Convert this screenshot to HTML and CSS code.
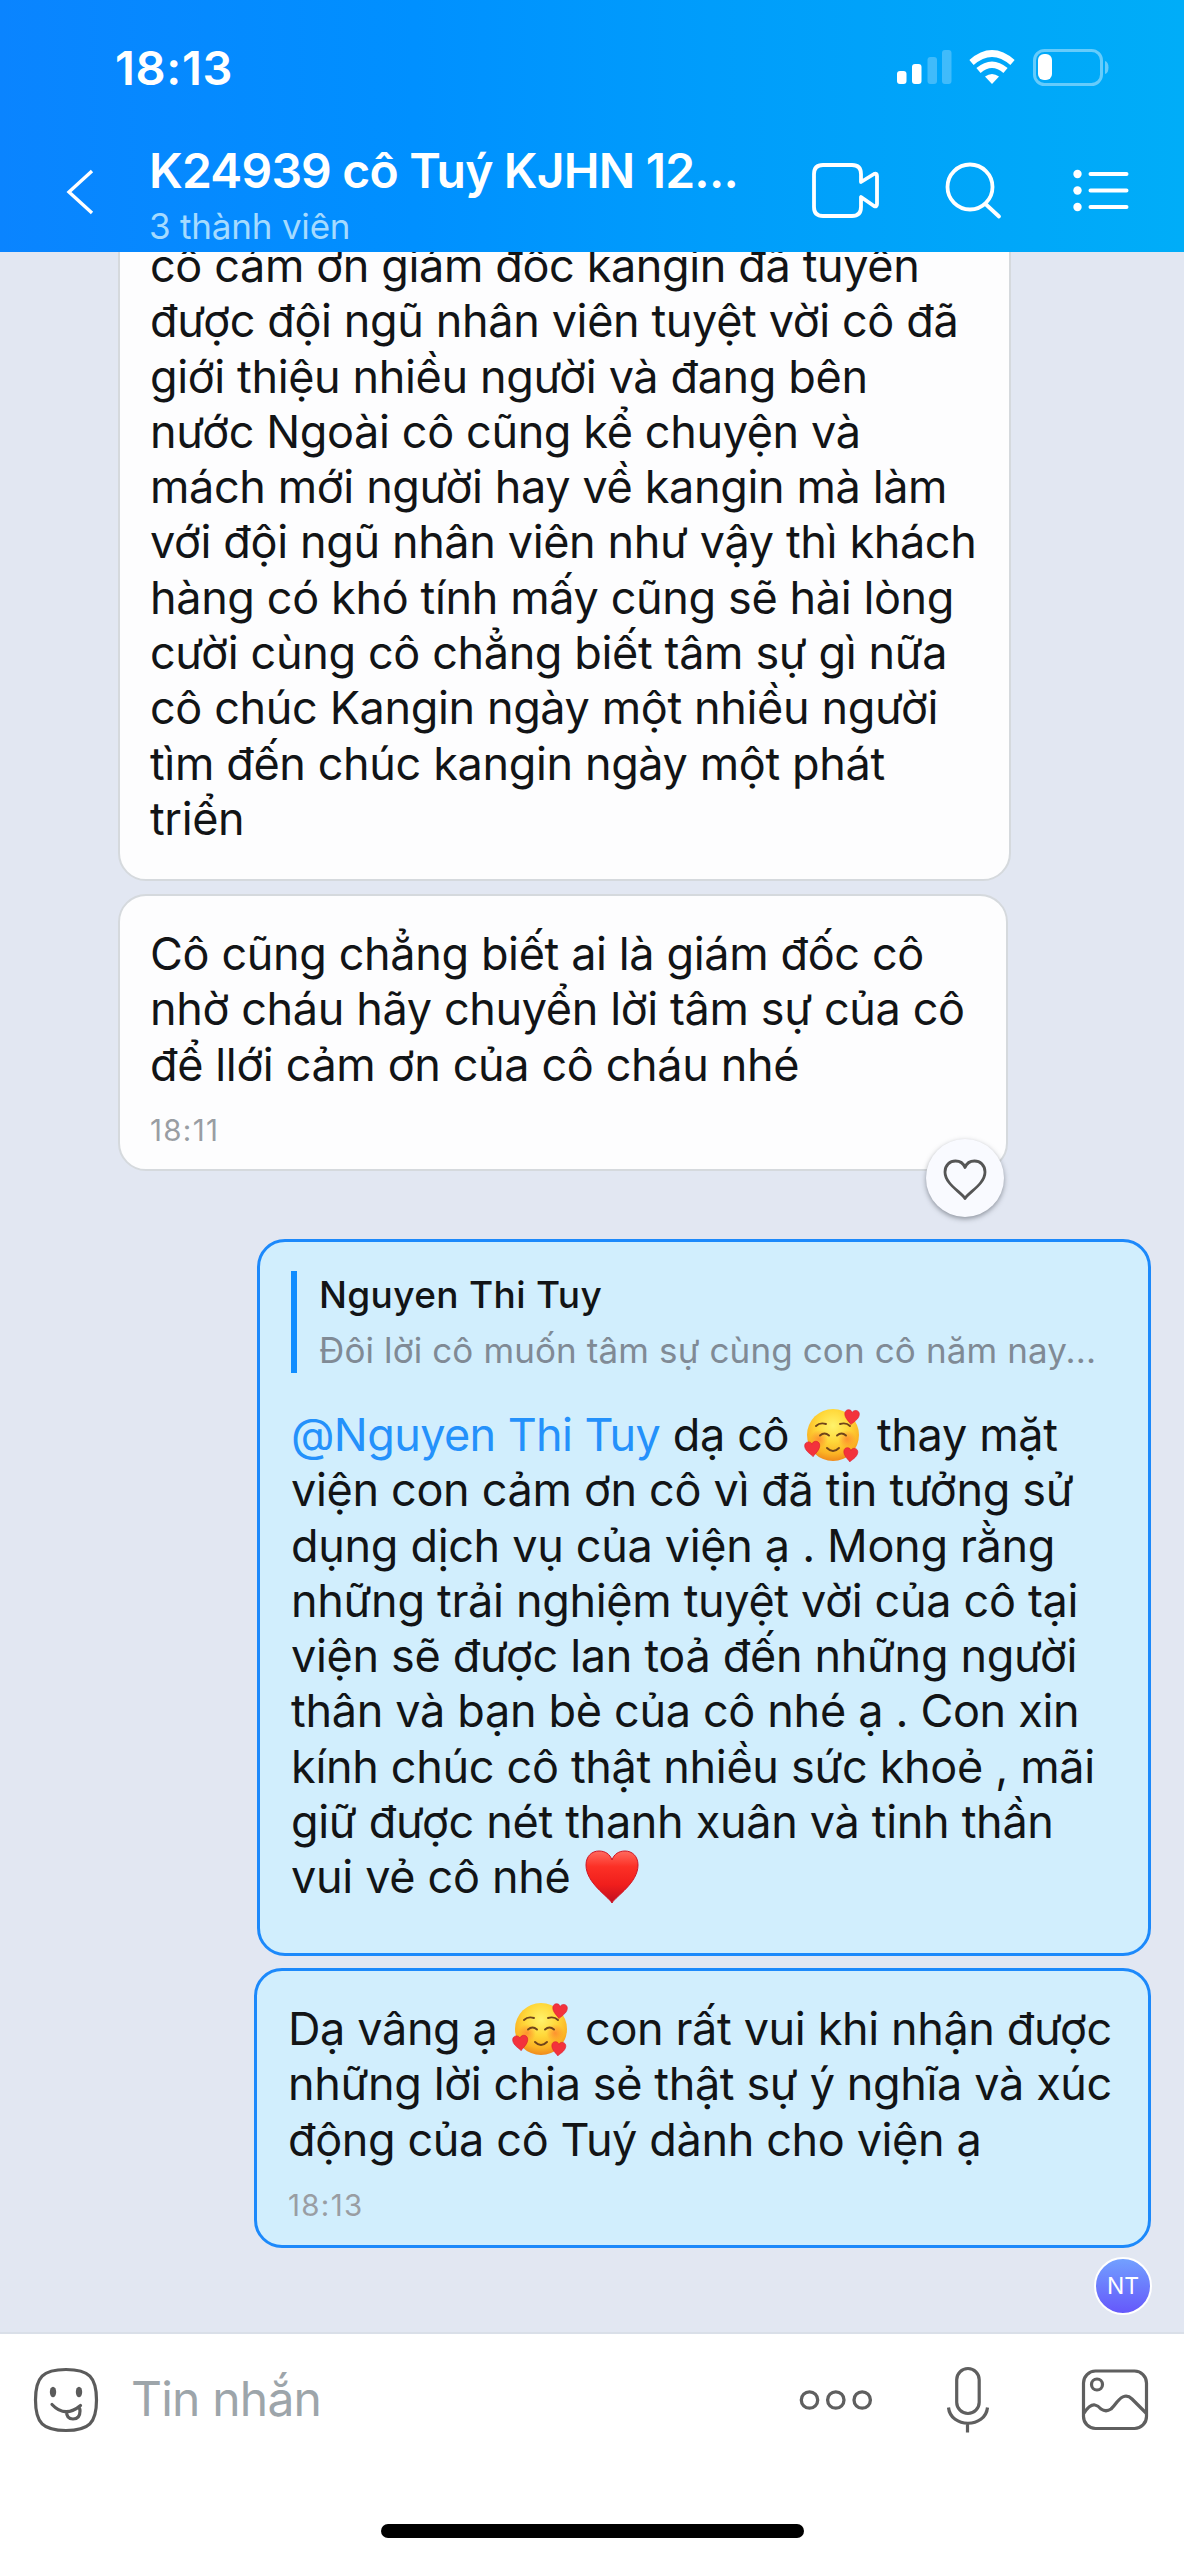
FILE: index.html
```html
<!DOCTYPE html>
<html lang="vi">
<head>
<meta charset="utf-8">
<title>Tin nhắn</title>
<link rel="stylesheet" href="styles.css">
</head>
<body>
<svg class="defs" width="0" height="0" aria-hidden="true">
  <defs>
    <radialGradient id="face" cx="50%" cy="32%" r="68%">
      <stop offset="0" stop-color="#fff36b"/><stop offset=".45" stop-color="#ffd83a"/><stop offset=".8" stop-color="#fbb324"/><stop offset="1" stop-color="#f08a1c"/>
    </radialGradient>
    <radialGradient id="blush"><stop offset="0" stop-color="#ff6a2c" stop-opacity=".6"/><stop offset="1" stop-color="#ff6a2c" stop-opacity="0"/></radialGradient>
    <linearGradient id="red" x1="0" y1="0" x2="0" y2="1">
      <stop offset="0" stop-color="#ff6a5e"/><stop offset=".3" stop-color="#fc3026"/><stop offset=".65" stop-color="#f01e1c"/><stop offset="1" stop-color="#c00d20"/>
    </linearGradient>
    <path id="heart" d="M27 53C23 46 1 33 1 15 1 6 7 1 14 1c6 0 11 3 13 9 2-6 7-9 13-9 7 0 13 5 13 14 0 18-22 31-26 38Z"/>
    <symbol id="love-face" viewBox="0 0 58 54">
      <circle cx="29" cy="27" r="26" fill="url(#face)"/>
      <circle cx="15" cy="31" r="9" fill="url(#blush)"/><circle cx="43" cy="31" r="9" fill="url(#blush)"/>
      <g fill="none" stroke="#70441a" stroke-width="1.9" stroke-linecap="round">
        <path d="M12 18q4-4 10-2M36 16q6-2 10 2"/>
        <path d="M16 27.500q4.500-4 9 0M33 27.500q4.500-4 9 0"/><path d="M23 40q6 6 12 0"/>
      </g>
      <g fill="#f3323c" stroke="#d9182c" stroke-width="2">
        <use href="#heart" transform="translate(41 1) rotate(6) scale(.28)"/>
        <use href="#heart" transform="translate(0 34) rotate(-5) scale(.29)"/>
        <use href="#heart" transform="translate(40 39) rotate(6) scale(.27)"/>
      </g>
    </symbol>
  </defs>
</svg>
<div class="phone">
  <header class="header">
    <div class="status">
      <span class="clock">18:13</span>
      <svg class="status-icons" width="216" height="40" viewBox="0 0 216 40">
        <g fill="#fff">
          <rect x="1" y="23" width="9.500" height="13" rx="3"/><rect x="16" y="16" width="9.500" height="20" rx="3"/>
          <g opacity=".25"><rect x="31.500" y="9" width="9.500" height="27" rx="3"/><rect x="46" y="2" width="9.500" height="34" rx="3"/></g>
          <path d="M96 36l-7-7.500q7-5 14 0Z"/>
        </g>
        <g fill="none" stroke="#fff" stroke-width="6.500"><path d="M75.500 14.500q20.500-18 41 0"/><path d="M82.500 22.500q13.500-11.500 27 0"/></g>
        <rect x="138.500" y="2.500" width="67" height="34" rx="10" fill="none" stroke="#fff" stroke-opacity=".4" stroke-width="3"/>
        <rect x="142" y="6" width="14" height="26" rx="6" fill="#fff"/>
        <path d="M209 13v13q3.500-1 3.500-6.500T209 13Z" fill="#fff" fill-opacity=".4"/>
      </svg>
    </div>
    <div class="nav">
      <svg class="back" width="32" height="50" viewBox="0 0 32 50" fill="none" stroke="#fff" stroke-width="3.400"><path d="M28 4L5 25l23 21"/></svg>
      <div class="titles">
        <h1 class="title">K24939 cô Tuý KJHN 12...</h1>
        <p class="subtitle">3 thành viên</p>
      </div>
      <div class="actions">
        <svg width="70" height="58" viewBox="0 0 70 58" fill="none" stroke="#fff" stroke-width="3.800" stroke-linejoin="round"><path d="M11 3h29q9 0 9 9v8L62 12q3-1.500 3 2v28q0 3.500-3 2L49 35v10q0 9-9 9H11q-9 0-9-9V12q0-9 9-9Z"/></svg>
        <svg width="64" height="58" viewBox="0 0 64 58" fill="none" stroke="#fff" stroke-width="3.800" stroke-linecap="round"><circle cx="25" cy="25" r="22.500"/><path d="M40.500 42L54 54.500"/></svg>
        <svg width="58" height="44" viewBox="0 0 58 44" fill="#fff"><circle cx="5.500" cy="5" r="4.200"/><circle cx="5.500" cy="21.500" r="4.200"/><circle cx="5.500" cy="38" r="4.200"/><path d="M18.500 5h36M18.500 21.500h36M18.500 38h36" stroke="#fff" stroke-width="4" stroke-linecap="round"/></svg>
      </div>
    </div>
  </header>

  <main class="chat">
    <article class="bubble received first">
      <p class="text"><span>cô cảm ơn giám đốc kangin đã tuyển</span><span>được đội ngũ nhân viên tuyệt vời cô đã</span><span>giới thiệu nhiều người và đang bên</span><span>nước Ngoài cô cũng kể chuyện và</span><span>mách mới người hay về kangin mà làm</span><span>với đội ngũ nhân viên như vậy thì khách</span><span>hàng có khó tính mấy cũng sẽ hài lòng</span><span>cười cùng cô chẳng biết tâm sự gì nữa</span><span>cô chúc Kangin ngày một nhiều người</span><span>tìm đến chúc kangin ngày một phát</span><span>triển</span></p>
    </article>
    <article class="bubble received second">
      <p class="text"><span>Cô cũng chẳng biết ai là giám đốc cô</span><span>nhờ cháu hãy chuyển lời tâm sự của cô</span><span>để llới cảm ơn của cô cháu nhé</span></p>
      <time class="time">18:11</time>
      <button class="react" aria-label="Thích"><svg width="44" height="42" viewBox="0 0 44 42" fill="none" stroke="#555" stroke-width="2.800" stroke-linejoin="round"><path d="M22 39.500C18 33 2 25 2 13 2 6 7 2 12.500 2 17 2 20.500 4.500 22 8.500 23.500 4.500 27 2 31.500 2 37 2 42 6 42 13c0 12-16 20-20 26.500Z"/></svg></button>
    </article>
    <article class="bubble sent third">
      <blockquote class="quote"><strong class="quote-name">Nguyen Thi Tuy</strong><span class="quote-text">Đôi lời cô muốn tâm sự cùng con cô năm nay...</span></blockquote>
      <p class="text"><span><a class="mention">@Nguyen Thi Tuy</a> dạ cô <svg class="emoji"><use href="#love-face"/></svg> thay mặt</span><span>viện con cảm ơn cô vì đã tin tưởng sử</span><span>dụng dịch vụ của viện ạ . Mong rằng</span><span>những trải nghiệm tuyệt vời của cô tại</span><span>viện sẽ được lan toả đến những người</span><span>thân và bạn bè của cô nhé ạ . Con xin</span><span>kính chúc cô thật nhiều sức khoẻ , mãi</span><span>giữ được nét thanh xuân và tinh thần</span><span>vui vẻ cô nhé <svg class="emoji red-heart" viewBox="0 0 54 54"><use href="#heart" fill="url(#red)" stroke="#cf1524" stroke-width="1"/></svg></span></p>
    </article>
    <article class="bubble sent fourth">
      <p class="text"><span>Dạ vâng ạ <svg class="emoji"><use href="#love-face"/></svg> con rất vui khi nhận được</span><span>những lời chia sẻ thật sự ý nghĩa và xúc</span><span>động của cô Tuý dành cho viện ạ</span></p>
      <time class="time">18:13</time>
    </article>
    <div class="seen">NT</div>
  </main>

  <footer class="composer">
    <div class="composer-row">
      <svg class="sticker" width="66" height="66" viewBox="0 0 66 66" fill="none" stroke="#5b5b5b" stroke-width="3.200" stroke-linecap="round"><path d="M33 2.500C56 2.500 63.500 10 63.500 33S56 63.500 33 63.500 2.500 56 2.500 33 10 2.500 33 2.500Z"/><ellipse cx="20" cy="25" rx="3.200" ry="5.200" fill="#5b5b5b" stroke="none"/><ellipse cx="46" cy="25" rx="3.200" ry="5.200" fill="#5b5b5b" stroke="none"/><path d="M19 37.500q13 14 28.500 1M33.500 44.500q0 7.500 6.500 7.500 7 0 7-8 0-2-1-4"/></svg>
      <span class="placeholder">Tin nhắn</span>
      <svg class="more" width="76" height="24" viewBox="0 0 76 24" fill="none" stroke="#5f5f5f" stroke-width="3.300"><circle cx="11.500" cy="12" r="8.200"/><circle cx="37.800" cy="12" r="8.200"/><circle cx="64.200" cy="12" r="8.200"/></svg>
      <svg class="mic" width="44" height="68" viewBox="0 0 44 68" fill="none" stroke="#5f5f5f" stroke-width="3.200"><rect x="10.700" y="2.500" width="22.500" height="45" rx="11.250"/><path d="M2.500 41.500c2 21 37 21 39 0M21.500 57v9.500"/></svg>
      <svg class="photo" width="68" height="64" viewBox="0 0 68 64" fill="none" stroke="#5f5f5f" stroke-width="3.200"><rect x="2.500" y="3" width="63" height="57.500" rx="12"/><circle cx="16" cy="16.500" r="5.500"/><path d="M3 45q6-9 11-8 3 .5 6 4 5 3.500 10 0 3-3 6-7 8-10 15-3l14 14"/></svg>
    </div>
    <div class="home"></div>
  </footer>
</div>
</body>
</html>
```
FILE: styles.css
```css
* { box-sizing: border-box; }
body { margin: 0; font-family: Inter, "Noto Sans", sans-serif; color: #121416; }
h1, p, blockquote { margin: 0; font-weight: 400; }
svg { flex: none; display: block; }
.defs { position: absolute; }
.phone { width: 1184px; height: 2560px; display: flex; flex-direction: column; overflow: hidden; background: #fff; }

.header { flex: none; height: 252px; color: #fff; background: linear-gradient(90deg, #0a84ff 0%, #0090ff 35%, #009dfb 60%, #00adf8 100%); }
.status { height: 136px; padding: 48px 72px 0 115px; display: flex; justify-content: space-between; }
.clock { font-size: 47px; line-height: 40px; font-weight: 600; letter-spacing: .7px; }
.nav { height: 116px; padding: 0 54px 0 64px; display: flex; align-items: flex-start; }
.back { margin-top: 31px; }
.titles { margin-left: 53px; width: 647px; white-space: nowrap; }
.title { margin-top: 5px; font-size: 48px; line-height: 60px; font-weight: 600; letter-spacing: -.8px; }
.subtitle { font-size: 35px; line-height: 46px; letter-spacing: -.2px; color: #a5dbff; padding-top: 2px; }
.actions { flex: 1; display: flex; justify-content: space-between; align-items: center; height: 109px; margin-left: 16px; }

.chat { flex: 1; min-height: 0; overflow: hidden; display: flex; flex-direction: column; background: #e2e7f2; }
.bubble { flex: none; border-radius: 28px; }
.received { margin-left: 118px; width: 890px; padding: 0 30px; background: #fdfdfe; border: 2px solid #d5d9dd; position: relative; }
.sent { align-self: flex-end; margin-right: 33px; width: 894px; padding: 0 31px; background: #d1eefd; border: 3px solid #1c89fb; }
.first { width: 893px; height: 689px; margin-top: -60px; padding-top: 44px; }
.second { height: 277px; margin-top: 13px; padding-top: 30px; }
.third { height: 717px; margin-top: 68px; padding-top: 29px; }
.fourth { width: 897px; height: 280px; margin-top: 12px; padding-top: 30px; }
.text { font-size: 45px; line-height: 55.3px; letter-spacing: -.37px; }
.text > span { display: block; white-space: nowrap; height: 55.3px; }
.time { display: block; margin-top: 20px; font-size: 29.500px; line-height: 36px; letter-spacing: 1.3px; color: #999da3; }
.mention { color: #2491fb; letter-spacing: -.6px; }
.emoji { display: inline-block; width: 58px; height: 54px; margin: 0 3px 0 2px; vertical-align: -11px; }
.red-heart { width: 54px; }
.react { position: absolute; right: 2px; bottom: -48px; width: 78px; height: 78px; padding: 4px 0 0; border: 0; border-radius: 50%; background: #f9faff; box-shadow: 0 2px 5px rgba(60, 65, 75, .5); display: grid; place-items: center; }
.quote { height: 102px; padding-left: 22px; border-left: 6px solid #118dff; display: flex; flex-direction: column; white-space: nowrap; }
.quote-name { margin-top: 1px; font-size: 37px; line-height: 46px; font-weight: 500; letter-spacing: .35px; }
.quote-text { margin-top: 9px; font-size: 35px; line-height: 46px; letter-spacing: .12px; color: #808a95; }
.third .text { margin-top: 34px; letter-spacing: -.32px; }
.seen { flex: none; align-self: flex-end; margin: 9px 32px 0 0; width: 58px; height: 58px; border: 2px solid #fff; border-radius: 50%; background: linear-gradient(#72a0ff, #6558fb); color: #fff; font-size: 23px; line-height: 55px; text-align: center; }

.composer { flex: none; height: 228px; border-top: 2px solid #d9dfe8; background: #fff; display: flex; flex-direction: column; align-items: center; }
.composer-row { width: 100%; height: 132px; padding: 0 35px 0 33px; display: flex; align-items: center; }
.placeholder { flex: 1; margin-left: 32px; font-size: 48px; line-height: 58px; padding-bottom: 2px; letter-spacing: -.8px; color: #9da5aa; }
.more { margin-right: 72px; }
.mic { margin-right: 91px; }
.home { margin-top: 58px; width: 423px; height: 14px; border-radius: 7px; background: #000; }
```
